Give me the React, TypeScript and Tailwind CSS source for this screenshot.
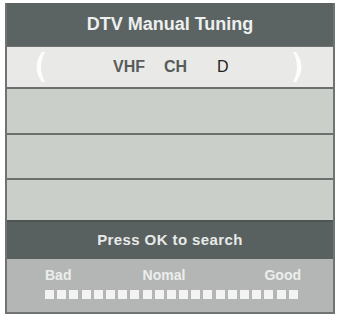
function Arrow({ flip }: { flip?: boolean }) {
  return (
    <svg width="12" height="30" viewBox="0 0 12 30" className={`blur-[0.7px] ${flip ? "-scale-x-100" : ""}`}>
      <path d="M9 0 Q-2 15 9 30 L12 30 Q4 15 12 0 Z" fill="#fdfdfd" />
    </svg>
  );
}

export default function App() {
  const bars = Array.from({ length: 21 });
  return (
    <div className="w-[340px] h-[315px] bg-white pt-[3px] pl-[5px]" style={{ fontFamily: '"Liberation Sans", Arial, sans-serif' }}>
      <div className="w-[330px] h-[311px] flex flex-col border-l-2 border-r-2 border-b-2 border-[#6f7473] bg-[#6f7473]">
        {/* title */}
        <div className="h-[43px] flex items-center justify-center bg-[#5b6462] text-[#eef0ef] text-[18px] font-bold">
          DTV Manual Tuning
        </div>
        {/* channel selector */}
        <div className="h-[42px] mt-[1px] flex items-center bg-[#e9eae7] border-b-2 border-[#6b706f]">
          <div className="w-[60px] pl-[26px] flex items-center">
            <Arrow />
          </div>
          <div className="flex-1 flex items-center pl-[46px] text-[16px]">
            <span className="font-bold text-[#575c5b]">VHF</span>
            <span className="ml-[19px] font-bold text-[#575c5b]">CH</span>
            <span className="ml-[30px] text-[#222]">D</span>
          </div>
          <div className="w-[60px] pl-[20px] flex items-center">
            <Arrow flip />
          </div>
        </div>
        {/* empty rows */}
        <div className="h-[46px] bg-[#cacfca] border-b-2 border-[#6b706f]" />
        <div className="h-[45px] bg-[#cacfca] border-b-2 border-[#6b706f]" />
        <div className="h-[40px] bg-[#cacfca]" />
        {/* press ok */}
        <div className="h-[39px] flex items-center justify-center bg-[#596160] text-[#e8eae9] text-[15px] font-bold tracking-[0.4px] border-t-2 border-[#4e5554]">
          Press OK to search
        </div>
        {/* signal */}
        <div className="flex-1 bg-[#b4b6b5] flex flex-col pl-[38px] pr-[30px] pt-[6px]">
          <div className="flex justify-between text-[14px] font-bold text-[#eceeed] pr-[2px]">
            <span>Bad</span>
            <span className="pr-[8px]">Nomal</span>
            <span>Good</span>
          </div>
          <div className="flex gap-[3.2px] mt-[4px]">
            {bars.map((_, i) => (
              <div key={i} className="w-[9px] h-[9px] bg-[#f3f3f3]" />
            ))}
          </div>
        </div>
      </div>
    </div>
  );
}
